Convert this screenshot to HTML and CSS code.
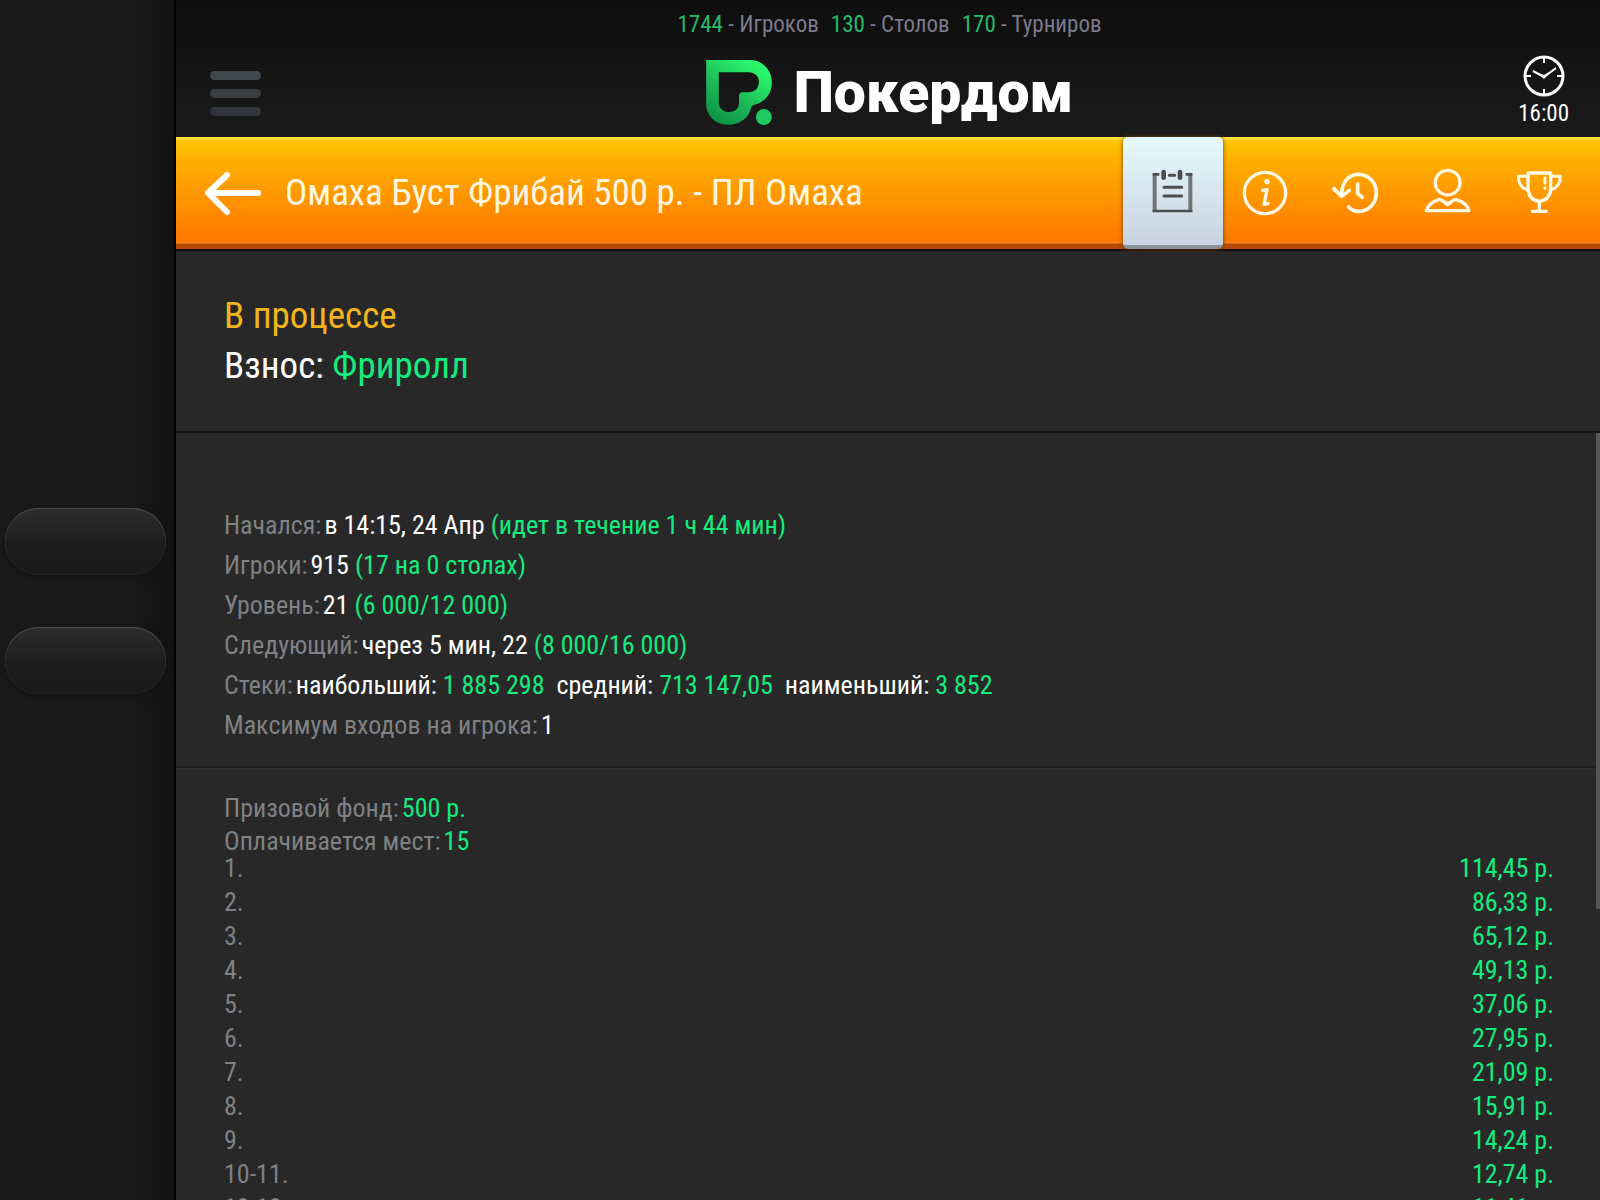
FILE: index.html
```html
<!DOCTYPE html>
<html lang="ru">
<head>
<meta charset="utf-8">
<title>Покердом</title>
<meta name="viewport" content="width=device-width, initial-scale=1">
<link rel="stylesheet" href="styles.css">
</head>
<body>
<div class="app">
  <aside class="sidebar">
    <button class="pill" type="button" aria-label="Стол 1"></button>
    <button class="pill" type="button" aria-label="Стол 2"></button>
  </aside>
  <main class="main">
    <header class="header">
      <p class="stats"><span><b>1744</b> - Игроков</span><span><b>130</b> - Столов</span><span><b>170</b> - Турниров</span></p>
      <div class="header-row">
        <button class="menu" type="button" aria-label="Меню"><span></span><span></span><span></span></button>
        <a class="brand" href="#">
          <svg class="brand-mark" viewBox="0 0 198 196" aria-hidden="true">
            <defs><linearGradient id="mark" gradientUnits="userSpaceOnUse" x1="150" y1="20" x2="40" y2="190"><stop offset="0" stop-color="#2bf56c"/><stop offset=".55" stop-color="#1cba57"/><stop offset="1" stop-color="#0c9346"/></linearGradient></defs>
            <path fill="url(#mark)" fill-rule="evenodd" d="M0 0H132C170 0 198 30 198 68C198 103 176 128 145 135C136 138 136 145 133 152C125 178 98 195 66 195C28 195 0 168 0 132ZM38 37V128C38 145 52 157 70 157C87 157 99 147 99 130V107C99 101 103 97 109 97H128C147 97 159 84 159 66C159 50 147 37 128 37Z"/>
            <circle cx="174" cy="172" r="24" fill="#1fcb60"/>
          </svg>
          <span class="brand-name">Покердом</span>
        </a>
        <div class="clock">
          <svg class="clock-icon" viewBox="0 0 42 42" fill="none" stroke="#fff" aria-hidden="true">
            <circle cx="21" cy="21" r="19" stroke-width="3"/>
            <path stroke-width="2" d="M21 3v5M21 34v5M3 21h5M34 21h5"/>
            <path stroke-width="2" d="M10 16l11 6 12-9"/>
            <path fill="#fff" stroke="none" d="M15 18l6 2 7-4-7 8z"/>
          </svg>
          <time>16:00</time>
        </div>
      </div>
    </header>
    <nav class="titlebar">
      <button class="back" type="button" aria-label="Назад">
        <svg viewBox="0 0 56 44" fill="none" stroke="#fff" stroke-width="6" stroke-linecap="round" stroke-linejoin="round"><path d="M22 4L3 22L22 41M4 22H53"/></svg>
      </button>
      <h1 class="title">Омаха Буст Фрибай 500 р. - ПЛ Омаха</h1>
      <div class="tabs">
        <button class="tab tab-active" type="button" aria-label="Лобби">
          <svg viewBox="144 384 150 150" fill="none" stroke="#4b4e51" stroke-width="8" stroke-linecap="round">
            <path stroke="#717679" stroke-width="12" stroke-linecap="butt" d="M164 400V516M271 400V516"/>
            <path stroke-linecap="butt" d="M158 513H277M158 403H178M257 403H277"/>
            <path stroke-width="9" d="M208 406H224M192 442H245M192 468H245"/>
            <path stroke-width="14" d="M191 396V413M240 396V413"/>
          </svg>
        </button>
        <button class="tab" type="button" aria-label="Информация">
          <svg viewBox="417 384 150 150" fill="none" stroke="#fff8e4" stroke-width="10" stroke-linecap="round" stroke-linejoin="round">
            <circle cx="495" cy="459" r="62"/>
            <path d="M488 451L501 449L492 493L504 490"/>
            <circle cx="501" cy="425" r="8" fill="#fff8e4" stroke="none"/>
          </svg>
        </button>
        <button class="tab" type="button" aria-label="История">
          <svg viewBox="693 384 150 150" fill="none" stroke="#fff8e4" stroke-width="11" stroke-linecap="round" stroke-linejoin="round">
            <path d="M725 466C724 429 744 403 775 403C806 403 829 428 829 459C829 490 806 514 776 514C763 514 754 510 746 501"/>
            <path d="M701 446L725 469L748 451M773 432V460L787 472"/>
          </svg>
        </button>
        <button class="tab" type="button" aria-label="Игроки">
          <svg viewBox="969 384 150 150" fill="none" stroke="#fff8e4" stroke-width="10" stroke-linecap="round" stroke-linejoin="round">
            <circle cx="1043" cy="428" r="37"/>
            <path d="M1019 478L1043 491L1066 478C1088 484 1103 494 1107 512H979C984 494 998 484 1019 478Z"/>
            <path d="M1034 488L1043 494L1052 488"/>
          </svg>
        </button>
        <button class="tab" type="button" aria-label="Призы">
          <svg viewBox="1245 384 150 150" fill="none" stroke="#fff8e4" stroke-width="10" stroke-linecap="round" stroke-linejoin="round">
            <path d="M1284 399H1352V442C1352 469 1339 482 1318 484C1297 482 1284 469 1284 442ZM1318 484V512M1297 514H1339"/>
            <path stroke-width="9" d="M1284 409H1255C1255 431 1264 445 1284 450M1352 409H1381C1381 431 1372 445 1352 450M1335 414V430M1335 443V445"/>
          </svg>
        </button>
      </div>
    </nav>
    <section class="status">
      <p class="state">В процессе</p>
      <p>Взнос: <em>Фриролл</em></p>
    </section>
    <div class="content">
      <dl class="details">
        <div><dt>Начался:</dt><dd>в 14:15, 24 Апр <em>(идет в течение 1 ч 44 мин)</em></dd></div>
        <div><dt>Игроки:</dt><dd>915 <em>(17 на 0 столах)</em></dd></div>
        <div><dt>Уровень:</dt><dd>21 <em>(6 000/12 000)</em></dd></div>
        <div><dt>Следующий:</dt><dd>через 5 мин, 22 <em>(8 000/16 000)</em></dd></div>
        <div><dt>Стеки:</dt><dd>наибольший: <em>1 885 298</em>&nbsp; средний: <em>713 147,05</em>&nbsp; наименьший: <em>3 852</em></dd></div>
        <div><dt>Максимум входов на игрока:</dt><dd>1</dd></div>
      </dl>
      <section class="prizes">
        <dl class="fund">
          <div><dt>Призовой фонд:</dt><dd><em>500 р.</em></dd></div>
          <div><dt>Оплачивается мест:</dt><dd><em>15</em></dd></div>
        </dl>
        <table class="payouts">
          <tbody>
            <tr><th scope="row">1.</th><td>114,45 р.</td></tr>
            <tr><th scope="row">2.</th><td>86,33 р.</td></tr>
            <tr><th scope="row">3.</th><td>65,12 р.</td></tr>
            <tr><th scope="row">4.</th><td>49,13 р.</td></tr>
            <tr><th scope="row">5.</th><td>37,06 р.</td></tr>
            <tr><th scope="row">6.</th><td>27,95 р.</td></tr>
            <tr><th scope="row">7.</th><td>21,09 р.</td></tr>
            <tr><th scope="row">8.</th><td>15,91 р.</td></tr>
            <tr><th scope="row">9.</th><td>14,24 р.</td></tr>
            <tr><th scope="row">10-11.</th><td>12,74 р.</td></tr>
            <tr><th scope="row">12-13.</th><td>11,41 р.</td></tr>
          </tbody>
        </table>
      </section>
      <div class="scroll-thumb"></div>
    </div>
  </main>
</div>
</body>
</html>
```
FILE: styles.css
```css
* { box-sizing: border-box; }

body {
  margin: 0;
  background: #282828;
  color: #fff;
  font-family: "Roboto Condensed", Roboto, sans-serif;
  font-size: 26px;
}

p, h1, dl, dd { margin: 0; }
em, b { font-style: normal; font-weight: 400; color: #14ec7f; }
button { padding: 0; border: 0; background: none; cursor: pointer; }
svg { display: block; }

.app {
  display: grid;
  grid-template-columns: 176px minmax(0, 1fr);
  height: 100vh;
  overflow: hidden;
}

/* Left rail */
.sidebar {
  display: flex;
  flex-direction: column;
  justify-content: center;
  align-items: flex-start;
  gap: 52px;
  padding: 2px 8px 0 5px;
  border-right: 2px solid #000;
  background: linear-gradient(90deg, #1b1b1b 70%, #121212);
}
.pill {
  width: 100%;
  height: 67px;
  border-radius: 34px;
  background: linear-gradient(#2c2c2c, #1d1d1d 55%, #1a1a1a);
  box-shadow: inset 0 1px 1px #505050, inset 0 0 2px #333, 0 4px 12px #141414;
}

.main { display: flex; flex-direction: column; min-width: 0; min-height: 0; }

/* Header */
.header {
  flex: none;
  height: 137px;
  padding: 9px 31px 0 34px;
  background: linear-gradient(#0e0e0e, #1b1b1b);
}
.stats {
  display: flex;
  justify-content: center;
  gap: 12px;
  font-size: 23px;
  line-height: 32px;
  color: #7c7a8a;
}
.stats b { color: #27b869; }
.header-row {
  display: grid;
  grid-template-columns: 1fr auto 1fr;
  align-items: center;
  height: 96px;
}
.menu { display: grid; gap: 9px; width: 51px; margin-top: 8px; }
.menu span { height: 9px; border-radius: 5px; background: #40484b; }
.menu span:nth-child(2) { background: #393e42; }
.menu span:nth-child(3) { background: #32343b; }
.brand { display: flex; align-items: center; gap: 22px; margin-top: 6px; color: #fff; text-decoration: none; }
.brand-mark { width: 66px; height: 65px; }
.brand-name { padding-top: 2px; font-family: Roboto, sans-serif; font-weight: 900; font-size: 57px; line-height: 64px; }
.clock { justify-self: end; display: grid; justify-items: center; gap: 3px; margin-top: 4px; font-size: 23px; line-height: 28px; }
.clock-icon { width: 42px; height: 42px; }

/* Title bar */
.titlebar {
  flex: none;
  display: flex;
  align-items: stretch;
  height: 114px;
  padding: 0 20px 0 29px;
  border-bottom: 2px solid #160b02;
  background: linear-gradient(#ffdf3c 0 2px, #ffc400 4px, #ffb000 22px, #ff7800 103px, #ff8519 106px, #b54b00 107px, #b54b00);
}
.back svg { width: 56px; height: 44px; }
.title { flex: 1; margin-left: 24px; font-size: 37px; font-weight: 400; line-height: 112px; color: #fff6df; white-space: nowrap; }
.tabs { display: flex; gap: 12px; }
.tab { display: grid; place-items: center; width: 80px; }
.tab svg { width: 50px; height: 50px; }
.tab-active {
  width: 100px;
  margin-right: -11px;
  padding-top: 4px;
  border-bottom: 4px solid #8b9298;
  border-radius: 5px;
  background: linear-gradient(#e6faff, #c8d2e0);
  box-shadow: 0 0 4px #6a3c00;
}

/* Status */
.status {
  flex: none;
  height: 182px;
  padding: 40px 48px;
  border-bottom: 2px solid #181818;
  font-size: 37px;
  line-height: 50px;
}
.state { color: #f2b61c; }

/* Tournament details */
.content { position: relative; flex: 1; min-height: 0; overflow: hidden; }
.details {
  padding: 72px 48px 21px;
  border-bottom: 2px solid #202020;
  line-height: 40px;
}
.details > div, .fund > div { display: flex; gap: 3px; white-space: nowrap; }
dt, th { color: #7f8184; font-weight: 400; }
.prizes { padding: 29px 46px 0 48px; border-top: 1px solid #2f2f2f; }
.fund { display: grid; gap: 13px; line-height: 20px; }
.payouts { width: 100%; border-collapse: collapse; line-height: 34px; }
.payouts th, .payouts td { padding: 0; text-align: left; }
.payouts td { text-align: right; color: #14ec7f; }
.scroll-thumb { position: absolute; top: 0; right: 0; width: 4px; height: 62%; background: #565656; }
```
